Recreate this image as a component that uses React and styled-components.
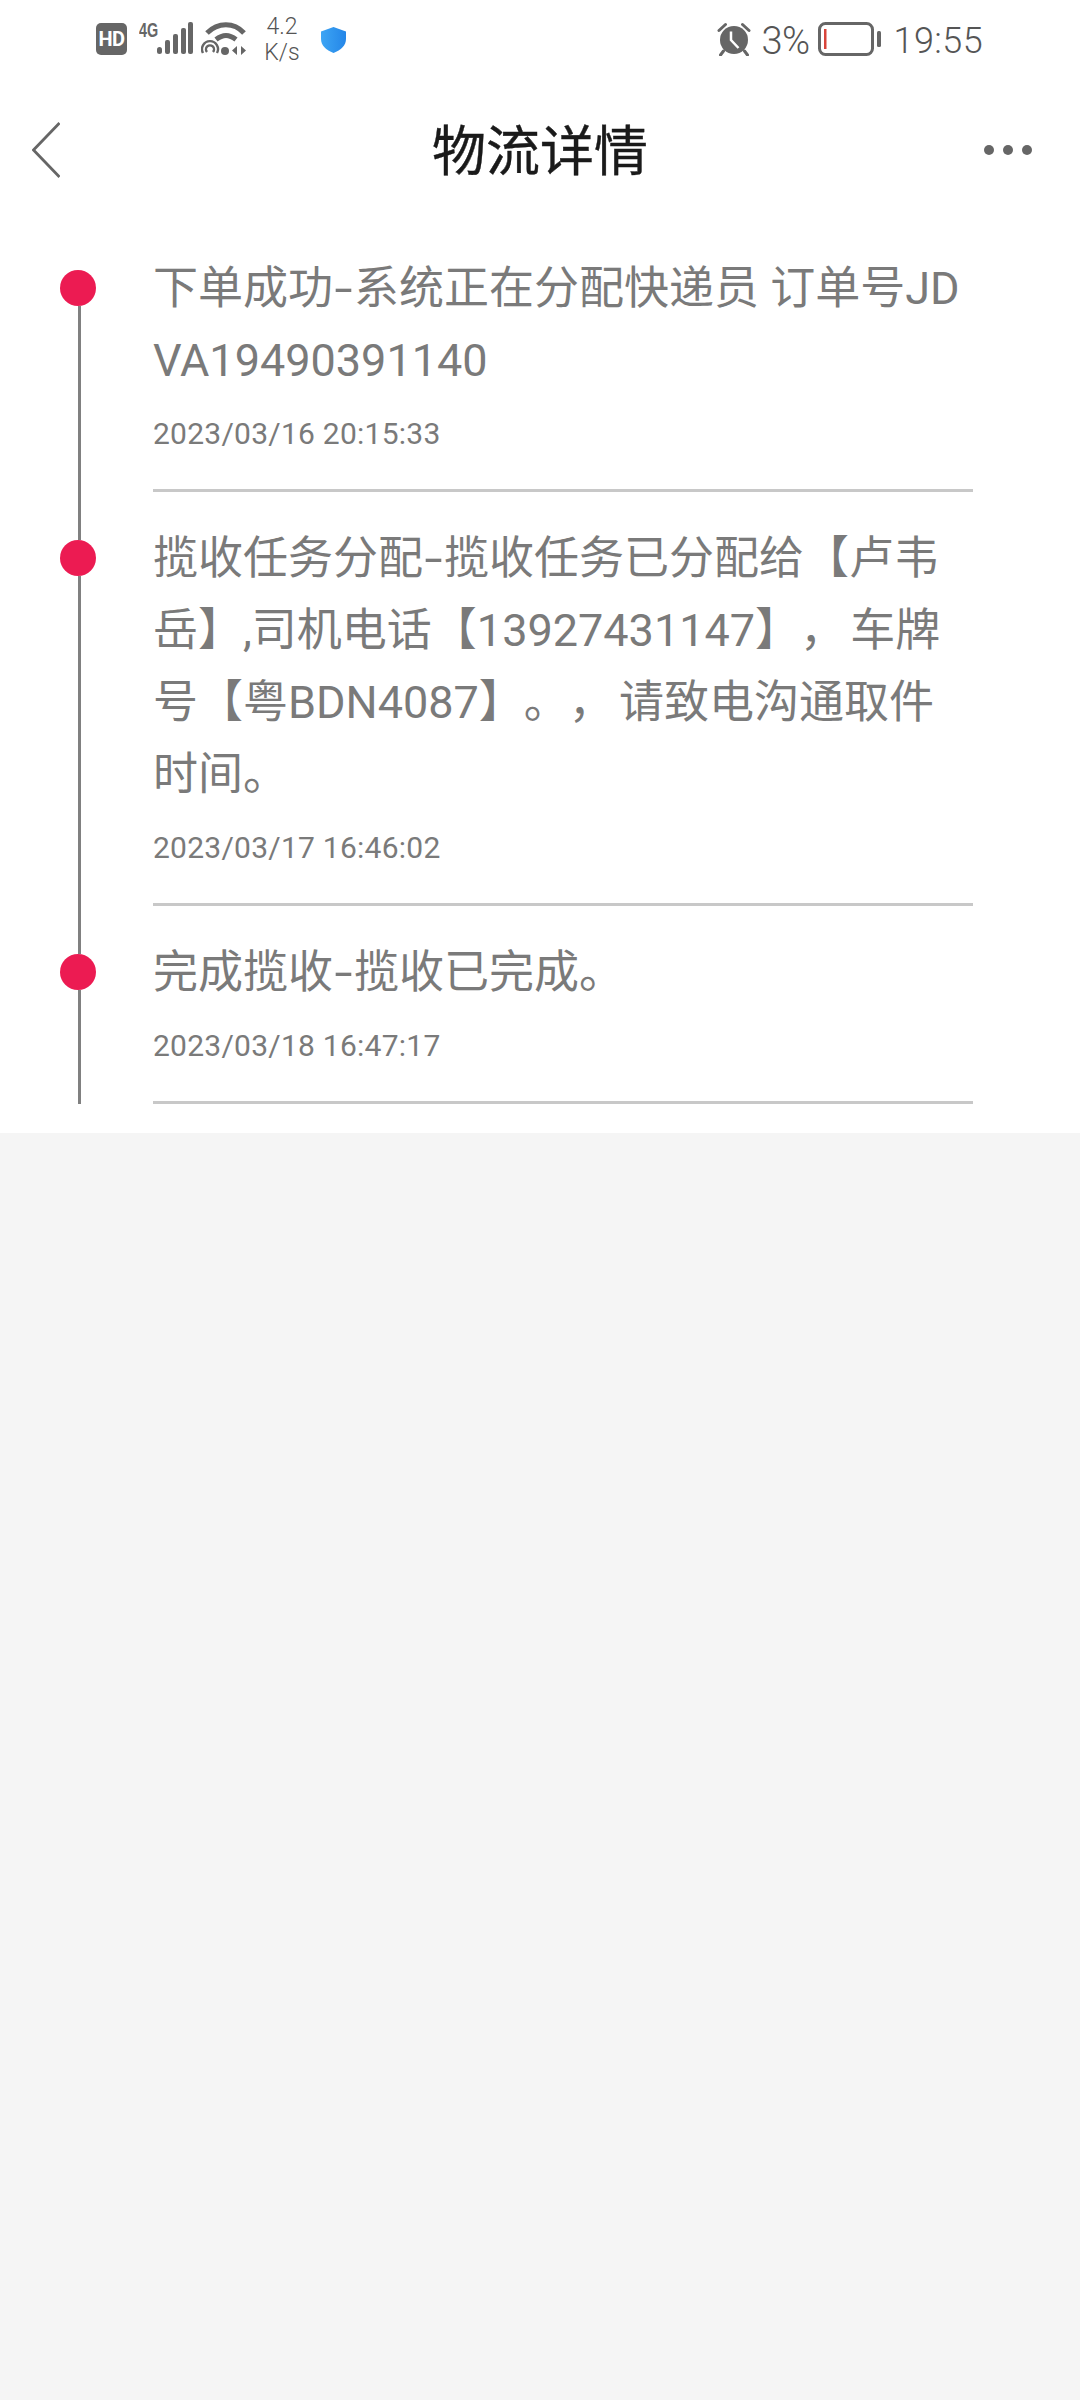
import React from "react";
import styled, { createGlobalStyle } from "styled-components";

const FONT = `Roboto, "Noto Sans CJK SC", sans-serif`;

const Global = createGlobalStyle`
  html, body { margin: 0; padding: 0; background: #f5f5f5; }
  * { box-sizing: border-box; }
`;

const Page = styled.div`
  width: 1080px;
  min-height: 2400px;
  background: #f5f5f5;
  font-family: ${FONT};
  text-spacing-trim: space-all;
`;
const Sheet = styled.div`
  background: #fff;
  padding-bottom: 29px;
`;
const StatusBar = styled.div`
  height: 78px;
  display: flex;
  align-items: flex-start;
  justify-content: space-between;
  padding: 22px 97px 0 96px;
  color: #555;
`;
const StatusGroup = styled.div`
  display: flex;
  align-items: flex-start;
`;
const HdBadge = styled.div`
  width: 31px;
  height: 32px;
  margin-top: 1px;
  border-radius: 5px;
  background: #666;
  color: #fff;
  font: 700 20px/32px ${FONT};
  text-align: center;
  letter-spacing: -0.5px;
`;
const NetLabel = styled.div`
  width: 18px;
  margin-left: 12px;
  font: 700 20px/17px "Liberation Sans", sans-serif;
  color: #666;
  transform: scaleX(0.72);
  transform-origin: left top;
  white-space: nowrap;
`;
const Speed = styled.div`
  margin-left: 12px;
  width: 38px;
  font: 300 23px/26px ${FONT};
  text-align: center;
  margin-top: -8px;
  white-space: nowrap;
`;
const Percent = styled.span`
  font: 300 38px/40px ${FONT};
  margin: -1px 8px 0 10px;
  letter-spacing: -0.5px;
`;
const Clock = styled.span`
  font: 300 36px/40px ${FONT};
  margin: -1px 0 0 12px;
  letter-spacing: 0.4px;
`;
const NavBar = styled.div`
  height: 144px;
  display: grid;
  grid-template-columns: 1fr auto 1fr;
  align-items: center;
  padding: 0 48px;
`;
const BackSlot = styled.div`
  margin-left: -16px;
  display: flex;
`;
const Title = styled.h1`
  margin: 5px 0 0;
  font: 400 54px/72px ${FONT};
  color: #1a1a1a;
  -webkit-text-stroke: 0.4px #1a1a1a;
`;
const Dots = styled.div`
  display: flex;
  gap: 9px;
  justify-content: flex-end;
`;
const MoreDot = styled.span`
  width: 10px;
  height: 10px;
  border-radius: 50%;
  background: #666;
`;
const Timeline = styled.div`
  display: flex;
  flex-direction: column;
`;
const Item = styled.div`
  display: flex;
`;
const Rail = styled.div`
  width: 153px;
  flex: none;
  display: flex;
  flex-direction: column;
`;
const RailLine = styled.div`
  width: 3px;
  margin-left: 78px;
  background: ${(p) => (p.$hidden ? "transparent" : "#808080")};
  height: ${(p) => (p.$grow ? "auto" : "48px")};
  flex: ${(p) => (p.$grow ? "1" : "none")};
`;
const Dot = styled.div`
  width: 36px;
  height: 36px;
  margin-left: 60px;
  border-radius: 50%;
  background: #ec1b52;
  flex: none;
`;
const Body = styled.div`
  width: 820px;
  padding-top: 31px;
  border-bottom: 3px solid #c8c8c8;
`;
const Message = styled.div`
  font: 400 45px/72px ${FONT};
  color: #7a7a7a;
  white-space: nowrap;
  word-spacing: ${(p) => (p.$tight ? "-6px" : "0")};
`;
const Dash = styled.span`
  display: inline-block;
  width: 21px;
  text-align: center;
  transform: scaleX(1.45);
`;
const Stamp = styled.div`
  margin: 17px 0 35px;
  font: 400 30px/40px ${FONT};
  letter-spacing: 0.25px;
  color: #7a7a7a;
`;

const SignalIcon = () => (
  <svg width="36" height="32" viewBox="0 0 36 32" fill="#666">
    <rect x="0" y="25" width="5" height="7" rx="2.500" />
    <rect x="8" y="18" width="5" height="14" rx="2" />
    <rect x="16" y="12" width="5" height="20" rx="2" />
    <rect x="24" y="6" width="5" height="26" rx="2" />
    <rect x="31" y="0" width="5" height="32" rx="2" />
  </svg>
);

const WifiIcon = () => (
  <svg width="50" height="34" viewBox="0 0 50 34" fill="none" style={{ marginLeft: 8 }}>
    <path d="M6 11C17 0 33 0 43 11" stroke="#666" strokeWidth="5" />
    <path d="M15 17.500C22 12 28 12 35 17.500" stroke="#666" strokeWidth="5" />
    <circle cx="24" cy="29" r="4" fill="#666" />
    <path d="M2 31a8 8 0 1 1 14 0" stroke="#666" strokeWidth="2.400" />
    <path d="M6 30a4 4 0 1 1 6 0" stroke="#666" strokeWidth="2.400" />
    <path d="M36 24v9l-5-4.500zM40 24l5 4.500-5 4.500z" fill="#666" />
  </svg>
);

const ShieldIcon = () => (
  <svg width="27" height="27" viewBox="0 0 27 27" style={{ margin: "4px 0 0 19px" }}>
    <defs>
      <linearGradient id="shieldFill" x1="0" y1="0" x2="1" y2="0">
        <stop offset="0" stopColor="#3da5f4" />
        <stop offset="1" stopColor="#2486e8" />
      </linearGradient>
    </defs>
    <path d="M13.500 1 26 5.500V13c0 6.500-5 11-12.500 14C6 24 1 19.500 1 13V5.500z" fill="url(#shieldFill)" />
  </svg>
);

const AlarmIcon = () => (
  <svg width="34" height="34" viewBox="0 0 34 34">
    <circle cx="17" cy="18" r="14" fill="#666" />
    <path d="M2 8.500 8.500 2.500M32 8.500 25.500 2.500M6.500 29 3.500 33M27.500 29 30.500 33" stroke="#666" strokeWidth="3" strokeLinecap="round" />
    <path d="M14 9.500V18L21.500 26" stroke="#fff" strokeWidth="2.500" fill="none" />
  </svg>
);

const BatteryIcon = () => (
  <svg width="64" height="34" viewBox="0 0 64 34">
    <rect x="1.500" y="1.500" width="53" height="31" rx="6" fill="#fff" stroke="#666" strokeWidth="3" />
    <rect x="6" y="7" width="2.500" height="20" fill="#d8443a" />
    <rect x="59" y="9" width="4" height="16" rx="1.500" fill="#666" />
  </svg>
);

const BackIcon = () => (
  <svg width="28" height="56" viewBox="0 0 28 56">
    <path d="M27.500 1 1.500 28l26 27" fill="none" stroke="#666" strokeWidth="2.800" />
  </svg>
);

const events = [
  {
    lines: [
      ["下单成功", "系统正在分配快递员 订单号JD"],
      ["VA19490391140"],
    ],
    time: "2023/03/16 20:15:33",
  },
  {
    tight: true,
    lines: [
      ["揽收任务分配", "揽收任务已分配给【卢韦"],
      ["岳】,司机电话【13927431147】， 车牌"],
      ["号【粤BDN4087】。， 请致电沟通取件"],
      ["时间。"],
    ],
    time: "2023/03/17 16:46:02",
  },
  {
    lines: [["完成揽收", "揽收已完成。"]],
    time: "2023/03/18 16:47:17",
  },
];

export default function App() {
  return (
    <Page>
      <Global />
      <Sheet>
        <StatusBar>
          <StatusGroup>
            <HdBadge>HD</HdBadge>
            <NetLabel>4G</NetLabel>
            <SignalIcon />
            <WifiIcon />
            <Speed>
              4.2
              <br />
              K/s
            </Speed>
            <ShieldIcon />
          </StatusGroup>
          <StatusGroup>
            <AlarmIcon />
            <Percent>3%</Percent>
            <BatteryIcon />
            <Clock>19:55</Clock>
          </StatusGroup>
        </StatusBar>
        <NavBar>
          <BackSlot>
            <BackIcon />
          </BackSlot>
          <Title>物流详情</Title>
          <Dots>
            <MoreDot />
            <MoreDot />
            <MoreDot />
          </Dots>
        </NavBar>
        <Timeline>
          {events.map((event, i) => (
            <Item key={event.time}>
              <Rail>
                <RailLine $hidden={i === 0} />
                <Dot />
                <RailLine $grow />
              </Rail>
              <Body>
                {event.lines.map((parts) => (
                  <Message key={parts.join("-")} $tight={event.tight}>
                    {parts.length > 1 ? (
                      <>
                        {parts[0]}
                        <Dash>-</Dash>
                        {parts[1]}
                      </>
                    ) : (
                      parts[0]
                    )}
                  </Message>
                ))}
                <Stamp>{event.time}</Stamp>
              </Body>
            </Item>
          ))}
        </Timeline>
      </Sheet>
    </Page>
  );
}
